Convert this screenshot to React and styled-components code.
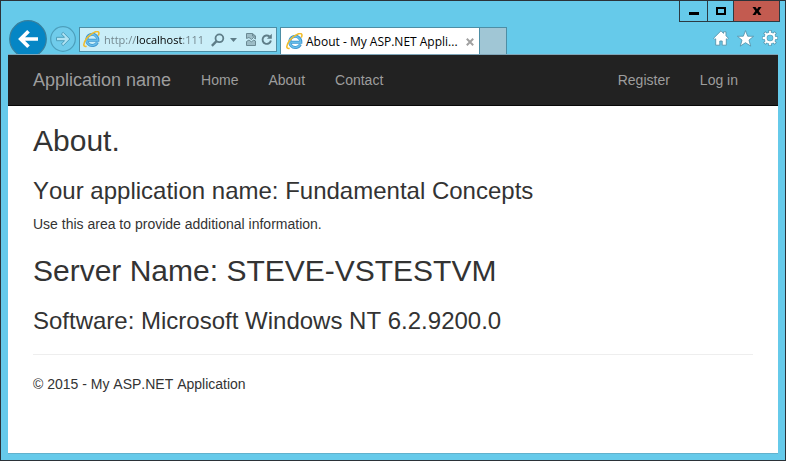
import React from "react";
import styled, { createGlobalStyle } from "styled-components";

const SYSTEM_FONT = '"Open Sans", "Noto Sans", sans-serif';
const PAGE_FONT = '"Liberation Sans", Arial, sans-serif';

const GlobalStyle = createGlobalStyle`
  *, *::before, *::after { box-sizing: border-box; }
  body { margin: 0; background: #66caea; }
  button, input { font: inherit; margin: 0; }
  button { cursor: pointer; }
`;

const BrowserWindow = styled.div`
  display: flex;
  flex-direction: column;
  min-height: 100vh;
  padding: 0 7px 6px;
  border: 1px solid #2b3238;
  background: #66caea;
  font-family: ${SYSTEM_FONT};
  font-size: 12px;
`;

const TitleBar = styled.div`
  display: flex;
  justify-content: flex-end;
  height: 19px;
`;

const WindowButton = styled.button`
  display: grid;
  place-items: center;
  width: ${(p) => p.$width}px;
  height: 21px;
  padding: 0;
  border: solid #2b3a42;
  border-width: 0 0 1px 1px;
  background: ${(p) => (p.$danger ? "#c35b50" : "#66caea")};

  &:last-child {
    border-right-width: 1px;
    margin-right: -2px;
  }
`;

const Toolbar = styled.div`
  display: flex;
  align-items: flex-start;
  height: 34px;
  overflow: hidden;
`;

const NavButtons = styled.div`
  display: flex;
  align-items: center;
  gap: 3px;
  height: 38px;
  padding-left: 1px;
`;

const IconButton = styled.button`
  display: grid;
  place-items: center;
  flex: none;
  padding: 0;
  border: 0;
  background: none;
`;

const AddressBar = styled.form`
  display: flex;
  align-items: center;
  flex: 0 1 198px;
  min-width: 0;
  height: 25px;
  margin: 7px 3px 0;
  padding: 0 3px;
  border: 1px solid #4d8ea5;
  background: #caeef8;
`;

const AddressInput = styled.input`
  flex: 1;
  min-width: 0;
  height: 20px;
  margin-left: 4px;
  padding: 0;
  border: 0;
  outline: 0;
  color: transparent;
  caret-color: #000;
  font-size: 11px;
  background: linear-gradient(90deg, #6f8289 33px, #000 33px, #000 79px, #6f8289 79px);
  -webkit-background-clip: text;
  background-clip: text;
`;

const AddressTools = styled.div`
  display: flex;
  align-items: center;
  gap: 5px;
`;

const AddressActions = styled(AddressTools)`
  margin-left: 4px;
`;

const Tab = styled.div`
  display: flex;
  align-items: center;
  flex: 0 1 200px;
  min-width: 0;
  height: 28px;
  margin-top: 7px;
  padding: 0 5px;
  border: 1px solid #4d8ea5;
  border-bottom: 0;
  background: #fff;
  color: #000;
`;

const TabTitle = styled.span`
  flex: 1;
  margin-left: 3px;
  white-space: nowrap;
`;

const NewTabButton = styled.button`
  flex: 0 0 27px;
  height: 28px;
  margin-top: 7px;
  padding: 0;
  border: 1px solid #4d8ea5;
  border-width: 1px 1px 0 0;
  background: #a0c6d5;
`;

const BrowserTools = styled.div`
  display: flex;
  align-items: center;
  gap: 8px;
  height: 36px;
  margin-left: auto;
`;

const Viewport = styled.div`
  flex: 1;
  border-top: 1px solid #7fa5b8;
  border-bottom: 1px solid #62b2cd;
  background: #fff;
  color: #333;
  font-family: ${PAGE_FONT};
  font-size: 14px;
  font-kerning: none;
  line-height: 20px;
`;

const Navbar = styled.nav`
  display: flex;
  align-items: center;
  height: 51px;
  padding: 0 25px;
  border-bottom: 1px solid #080808;
  background: #222;
`;

const Brand = styled.a`
  margin-right: 15px;
  color: #9d9d9d;
  font-size: 18px;
  text-decoration: none;
`;

const NavList = styled.ul`
  display: flex;
  margin: 0;
  padding: 0;
  list-style: none;

  & + & {
    margin-left: auto;
  }
`;

const NavLink = styled.a`
  display: block;
  padding: 15px;
  color: #9d9d9d;
  text-decoration: none;
`;

const Content = styled.main`
  padding: 0 25px;
`;

const Heading = styled.h2`
  margin: 0;
  padding: 18px 0 10px;
  font-size: 30px;
  font-weight: 400;
  line-height: 33px;
`;

const Subheading = styled.h3`
  margin: 0;
  padding: 11px 0 10px;
  font-size: 24px;
  font-weight: 400;
  line-height: 26px;
`;

const Paragraph = styled.p`
  margin: 0 0 2px;
`;

const Footer = styled.footer`
  margin-top: 10px;
  padding: 19px 0;
  border-top: 1px solid #eee;
`;

function ExplorerIcon() {
  return (
    <svg width="17" height="17" viewBox="0 0 17 17" fill="none" aria-hidden="true">
      <path d="M14.4 11.300A5.600 5.600 0 1 1 14.900 9.300H4.500" stroke="#3d93cc" strokeWidth="2.900" />
      <path d="M14.200 11.300A5.500 5.500 0 1 1 14.700 9.300H5" stroke="#66bdea" strokeWidth="1.700" />
      <path d="M3.600 15.300C-.2 16.500-.1 12 4 7 8.500 1.700 14.700-.9 15.800 1.500c.4.900 0 2-.6 3" stroke="#f2bd2b" strokeWidth="1.600" />
    </svg>
  );
}

function BackIcon() {
  return (
    <svg width="38" height="38" viewBox="0 0 38 38" aria-hidden="true">
      <circle cx="19" cy="19" r="18.3" fill="#0586c5" stroke="#397f9c" strokeWidth="1.2" />
      <path d="M29 19H12M19.500 11.200 11.700 19l7.800 7.800" fill="none" stroke="#fff" strokeWidth="3.700" />
    </svg>
  );
}

function ForwardIcon() {
  return (
    <svg width="26" height="38" viewBox="0 0 26 38" aria-hidden="true">
      <circle cx="13" cy="19" r="12.3" fill="#70cceb" stroke="#4d9fbc" strokeWidth="1.2" />
      <path d="M6.500 17.300h8L11.300 14l1.900-1.700 6.600 6.700-6.600 6.700-1.900-1.700 3.200-3.300h-8z" fill="#b0e3f3" stroke="#4d9fbc" />
    </svg>
  );
}

function SearchIcon() {
  return (
    <svg width="14" height="14" viewBox="0 0 14 14" fill="none" stroke="#5e7d88" aria-hidden="true">
      <circle cx="8.400" cy="5.300" r="3.900" strokeWidth="1.800" />
      <path d="m5.500 8.200-4.600 4.600" strokeWidth="2.400" />
    </svg>
  );
}

function CaretIcon() {
  return (
    <svg width="7" height="4" viewBox="0 0 7 4" aria-hidden="true">
      <path d="M0 0h7L3.500 4z" fill="#5e7d88" />
    </svg>
  );
}

function BrokenPageIcon() {
  return (
    <svg width="10" height="13" viewBox="0 0 10 13" fill="#9dbdc7" stroke="#6b8a94" aria-hidden="true">
      <path d="M.5 5.500v-5h6l3 2.500v3L7.500 4.500 5.500 6.500 3 4.500z" />
      <path d="M6.500.5V3h3" fill="none" />
      <path d="M.5 12.500h9V8L7.500 7 5.500 9 3 7 .5 8.500z" />
    </svg>
  );
}

function RefreshIcon() {
  return (
    <svg width="12" height="13" viewBox="0 0 12 13" aria-hidden="true">
      <path d="M8.500 3.500A4.200 4.200 0 1 0 9.900 7.500" fill="none" stroke="#5e7d88" strokeWidth="1.900" />
      <path d="M10.800.8v5H5.900z" fill="#5e7d88" />
    </svg>
  );
}

function CloseTabIcon() {
  return (
    <svg width="8" height="8" viewBox="0 0 8 8" aria-hidden="true">
      <path d="m.8.8 6.400 6.400M7.200.8.8 7.200" stroke="#a0a0a0" strokeWidth="2" />
    </svg>
  );
}

function HomeIcon() {
  return (
    <svg width="16" height="16" viewBox="0 0 16 16" aria-hidden="true">
      <path d="M8 .8.600 8.200l1.200 1.300.9-.7v6.400h4.100v-4.200h2.400v4.200h4.100V8.800l.9.700 1.200-1.300L13 5.800V1.800h-2.500v1.600z" fill="#fff" stroke="#5795ae" strokeWidth=".9" />
    </svg>
  );
}

function StarIcon() {
  return (
    <svg width="17" height="17" viewBox="0 0 17 17" aria-hidden="true">
      <path d="m8.500.6 2.200 5.600 5.900.1-4.600 3.800 1.700 6-5.200-3.400-5.200 3.400 1.700-6L.4 6.300l5.900-.1z" fill="#fff" stroke="#5795ae" strokeWidth=".9" />
    </svg>
  );
}

function GearIcon() {
  return (
    <svg width="16" height="16" viewBox="0 0 16 16" fill="none" aria-hidden="true">
      <g stroke="#5795ae">
        <circle cx="8" cy="8" r="4.400" strokeWidth="3.400" />
        <path d="M8 0v3M8 13v3M0 8h3M13 8h3M2.300 2.300l2.200 2.200M11.500 11.500l2.200 2.200M13.700 2.300l-2.200 2.200M4.500 11.500l-2.200 2.200" strokeWidth="3.200" />
      </g>
      <g stroke="#fff">
        <circle cx="8" cy="8" r="4.400" strokeWidth="2.200" />
        <path d="M8 .7v2.500M8 12.800v2.500M.7 8h2.500M12.800 8h2.500M2.800 2.800l1.800 1.800M11.400 11.400l1.800 1.800M13.200 2.800l-1.800 1.800M4.600 11.400l-1.800 1.800" strokeWidth="1.800" />
      </g>
    </svg>
  );
}

function MinimizeIcon() {
  return (
    <svg width="10" height="10" viewBox="0 0 10 10" aria-hidden="true">
      <path d="M0 6h10v3H0z" />
    </svg>
  );
}

function MaximizeIcon() {
  return (
    <svg width="10" height="8" viewBox="0 0 10 8" aria-hidden="true">
      <path d="M1 1h8v6H1z" fill="none" stroke="#000" strokeWidth="2" />
    </svg>
  );
}

function CloseWindowIcon() {
  return (
    <svg width="10" height="8" viewBox="0 0 10 8" aria-hidden="true">
      <path d="M.5 0h3L5 2.200 6.500 0h3L6.700 4l2.800 4h-3L5 5.800 3.500 8h-3l2.800-4z" />
    </svg>
  );
}

export default function App() {
  return (
    <BrowserWindow>
      <GlobalStyle />
      <TitleBar>
        <WindowButton $width={28} aria-label="Minimize"><MinimizeIcon /></WindowButton>
        <WindowButton $width={26} aria-label="Maximize"><MaximizeIcon /></WindowButton>
        <WindowButton $width={47} $danger aria-label="Close"><CloseWindowIcon /></WindowButton>
      </TitleBar>
      <Toolbar>
        <NavButtons>
          <IconButton aria-label="Back"><BackIcon /></IconButton>
          <IconButton aria-label="Forward"><ForwardIcon /></IconButton>
        </NavButtons>
        <AddressBar onSubmit={(e) => e.preventDefault()}>
          <ExplorerIcon />
          <AddressInput aria-label="Address" defaultValue="http://localhost:111" />
          <AddressTools>
            <IconButton aria-label="Search"><SearchIcon /></IconButton>
            <IconButton type="button" aria-label="Show address history"><CaretIcon /></IconButton>
            <AddressActions>
              <IconButton type="button" aria-label="Compatibility view"><BrokenPageIcon /></IconButton>
              <IconButton type="button" aria-label="Refresh"><RefreshIcon /></IconButton>
            </AddressActions>
          </AddressTools>
        </AddressBar>
        <Tab>
          <ExplorerIcon />
          <TabTitle>About - My ASP.NET Appli...</TabTitle>
          <IconButton aria-label="Close tab"><CloseTabIcon /></IconButton>
        </Tab>
        <NewTabButton aria-label="New tab" />
        <BrowserTools>
          <IconButton aria-label="Home"><HomeIcon /></IconButton>
          <IconButton aria-label="Favorites"><StarIcon /></IconButton>
          <IconButton aria-label="Tools"><GearIcon /></IconButton>
        </BrowserTools>
      </Toolbar>
      <Viewport>
        <Navbar>
          <Brand href="#">Application name</Brand>
          <NavList>
            <li><NavLink href="#">Home</NavLink></li>
            <li><NavLink href="#">About</NavLink></li>
            <li><NavLink href="#">Contact</NavLink></li>
          </NavList>
          <NavList>
            <li><NavLink href="#">Register</NavLink></li>
            <li><NavLink href="#">Log in</NavLink></li>
          </NavList>
        </Navbar>
        <Content>
          <Heading>About.</Heading>
          <Subheading>Your application name: Fundamental Concepts</Subheading>
          <Paragraph>Use this area to provide additional information.</Paragraph>
          <Heading>Server Name: STEVE-VSTESTVM</Heading>
          <Subheading>Software: Microsoft Windows NT 6.2.9200.0</Subheading>
          <Footer>© 2015 - My ASP.NET Application</Footer>
        </Content>
      </Viewport>
    </BrowserWindow>
  );
}
